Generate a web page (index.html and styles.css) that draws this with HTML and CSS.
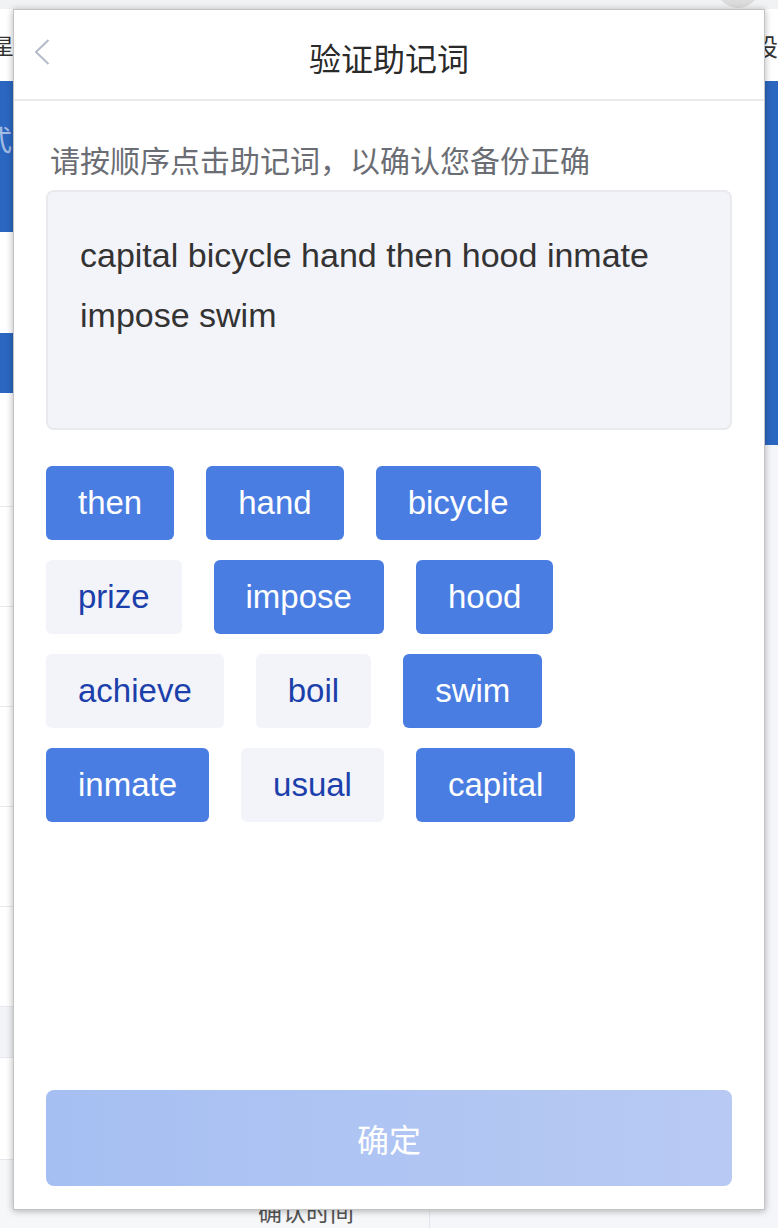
FILE: index.html
```html
<!DOCTYPE html>
<html lang="zh-CN">
<head>
<meta charset="utf-8">
<title>验证助记词</title>
<link rel="stylesheet" href="styles.css">
</head>
<body>
<div class="page">
  <div class="topbar"><span class="avatar"></span></div>
  <div class="cols">
    <div class="main">
      <div class="main-head"><span class="star">星</span></div>
      <div class="banner"><span class="banner-txt">式</span></div>
      <div class="blank"></div>
      <div class="tabs"></div>
      <div class="row first"></div>
      <div class="row"></div>
      <div class="row"></div>
      <div class="row"></div>
      <div class="row"></div>
      <div class="row"></div>
      <div class="band"></div>
      <div class="row last"></div>
      <div class="foot"><span class="foot-txt">确认时间</span></div>
    </div>
    <div class="side">
      <div class="side-head"><span class="side-txt">设</span></div>
      <div class="side-blue"></div>
    </div>
  </div>
</div>

<div class="modal">
  <div class="modal-head">
    <div class="back">
      <svg width="16" height="26" viewBox="0 0 16 26"><polyline points="14.5,1 2,13 14.5,25" fill="none" stroke="#b3bbcb" stroke-width="2"/></svg>
    </div>
    <div class="title">验证助记词</div>
    <div></div>
  </div>
  <div class="modal-body">
    <div class="hint">请按顺序点击助记词，以确认您备份正确</div>
    <div class="phrase">capital bicycle hand then hood inmate impose swim</div>
    <div class="words">
      <span class="word on">then</span>
      <span class="word on">hand</span>
      <span class="word on">bicycle</span>
      <span class="word off">prize</span>
      <span class="word on">impose</span>
      <span class="word on">hood</span>
      <span class="word off">achieve</span>
      <span class="word off">boil</span>
      <span class="word on">swim</span>
      <span class="word on">inmate</span>
      <span class="word off">usual</span>
      <span class="word on">capital</span>
    </div>
    <button class="confirm" type="button">确定</button>
  </div>
</div>
</body>
</html>
```
FILE: styles.css
```css
html, body {
  margin: 0;
  padding: 0;
}
body {
  width: 778px;
  height: 1228px;
  overflow: hidden;
  position: relative;
  background: #f5f6f9;
  font-family: "Liberation Sans", "Noto Sans CJK SC", sans-serif;
}

/* ---------- background page ---------- */
.page {
  width: 778px;
  height: 1228px;
  display: flex;
  flex-direction: column;
}
.topbar {
  height: 9px;
  background: #f1f2f4;
  display: flex;
  justify-content: flex-end;
  padding-right: 18px;
  overflow: hidden;
}
.avatar {
  width: 44px;
  height: 44px;
  border-radius: 50%;
  background: #dcdcdc;
  margin-top: -36px;
}
.cols {
  flex: 1;
  display: flex;
  min-height: 0;
}
.main {
  width: 440px;
  display: flex;
  flex-direction: column;
  background: #fff;
  overflow: hidden;
}
.main-head {
  height: 72px;
  flex-shrink: 0;
  display: flex;
  align-items: center;
  font-family: "Noto Sans CJK SC", sans-serif;
  font-size: 22px;
  color: #333;
}
.star { margin-left: -8px; margin-top: -2px; }
.banner {
  height: 151px;
  flex-shrink: 0;
  background: #2b67c1;
  display: flex;
  align-items: flex-start;
  font-family: "Noto Sans CJK SC", sans-serif;
}
.banner-txt {
  margin-left: -16px;
  margin-top: 38px;
  font-size: 28px;
  color: #a6bde4;
}
.blank { height: 101px; flex-shrink: 0; }
.tabs { height: 60px; flex-shrink: 0; background: #2b67c1; }
.row {
  height: 99px;
  flex-shrink: 0;
  border-bottom: 1px solid #e7e8ee;
}
.row.first { height: 113px; }
.band {
  height: 50px;
  flex-shrink: 0;
  background: #f3f4f8;
  border-bottom: 1px solid #e7e8ee;
}
.row.last { height: 101px; }
.foot {
  flex: 1;
  background: #f6f7f9;
  padding-left: 258px;
  padding-top: 36px;
  font-family: "Noto Sans CJK SC", sans-serif;
  font-size: 24px;
  line-height: 30px;
  color: #555;
}
.side {
  flex: 1;
  display: flex;
  flex-direction: column;
  background: #f5f6f9;
  border-left: 1px solid #e4e6eb;
}
.side-head {
  height: 72px;
  background: #fff;
  display: flex;
  align-items: center;
  padding-left: 324px;
  font-family: "Noto Sans CJK SC", sans-serif;
  font-size: 24px;
  color: #333;
  overflow: hidden;
}
.side-blue {
  height: 364px;
  background: #2b67c1;
}

/* ---------- modal ---------- */
.modal {
  position: absolute;
  left: 13px;
  top: 9px;
  width: 752px;
  height: 1201px;
  box-sizing: border-box;
  border: 1px solid #c4c4c4;
  background: #fff;
  box-shadow: 0 1px 7px rgba(0, 0, 0, 0.3);
  display: flex;
  flex-direction: column;
}
.modal-head {
  height: 89px;
  flex-shrink: 0;
  border-bottom: 2px solid #ebebeb;
  display: grid;
  grid-template-columns: 1fr auto 1fr;
  align-items: center;
}
.back {
  padding-left: 20px;
  display: flex;
  margin-top: -5px;
}
.title {
  font-family: "Noto Sans CJK SC", sans-serif;
  font-size: 32px;
  line-height: 32px;
  color: #2a2a2a;
  padding-top: 4px;
}
.modal-body {
  flex: 1;
  padding: 38px 32px 23px;
  display: flex;
  flex-direction: column;
}
.hint {
  margin-left: 4px;
  font-family: "Noto Sans CJK SC", sans-serif;
  font-size: 30px;
  line-height: 40px;
  color: #6a6d73;
}
.phrase {
  margin-top: 11px;
  height: 240px;
  box-sizing: border-box;
  border: 2px solid #e9eaee;
  border-radius: 8px;
  background: #f3f4f9;
  padding: 33px 32px 27px;
  font-size: 34px;
  line-height: 60px;
  color: #333;
}
.words {
  margin-top: 36px;
  display: flex;
  flex-wrap: wrap;
  gap: 20px 32px;
  max-width: 600px;
}
.word {
  height: 74px;
  line-height: 74px;
  padding: 0 32px;
  border-radius: 6px;
  font-size: 33px;
}
.word.on {
  background: #4a7de2;
  color: #fff;
}
.word.off {
  background: #f3f4f9;
  color: #1b3fab;
}
.confirm {
  margin-top: auto;
  height: 96px;
  border: none;
  border-radius: 8px;
  background: linear-gradient(90deg, #a6bff2, #b8caf3);
  color: #fff;
  font-family: "Noto Sans CJK SC", sans-serif;
  font-size: 32px;
  display: flex;
  align-items: center;
  justify-content: center;
  padding: 0;
}
```
